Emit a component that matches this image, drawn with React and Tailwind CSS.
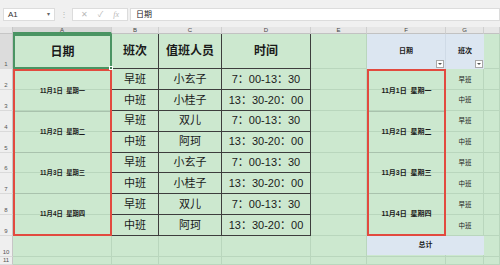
import React from "react";

const R = ["", "row-start-1", "row-start-2", "row-start-3", "row-start-4", "row-start-5", "row-start-6", "row-start-7", "row-start-8", "row-start-9", "row-start-10", "row-start-11", "row-start-12"];
const C = ["", "col-start-1", "col-start-2", "col-start-3", "col-start-4", "col-start-5", "col-start-6", "col-start-7", "col-start-8", "col-start-9"];

const groups = [
  { date: "11月1日  星期一", rows: [["早班", "小玄子", "7：00-13：30"], ["中班", "小桂子", "13：30-20：00"]] },
  { date: "11月2日  星期二", rows: [["早班", "双儿", "7：00-13：30"], ["中班", "阿珂", "13：30-20：00"]] },
  { date: "11月3日  星期三", rows: [["早班", "小玄子", "7：00-13：30"], ["中班", "小桂子", "13：30-20：00"]] },
  { date: "11月4日  星期四", rows: [["早班", "双儿", "7：00-13：30"], ["中班", "阿珂", "13：30-20：00"]] },
];

const letters = ["A", "B", "C", "D", "E", "F", "G", ""];

function Cell({ r, c, className = "", children }) {
  return <div className={`${R[r]} ${C[c]} ${className}`}>{children}</div>;
}

function FilterBtn() {
  return (
    <div className="absolute right-[1px] bottom-[1px] w-[8px] h-[8px] bg-white border border-[#a8a8a8] flex items-center justify-center">
      <div className="w-0 h-0 border-l-[2px] border-r-[2px] border-t-[2px] border-l-transparent border-r-transparent border-t-[#555]" />
    </div>
  );
}

export default function App() {
  const body = [];
  groups.forEach((g) => g.rows.forEach((row) => body.push(row)));

  const bgCells = [];
  for (let r = 2; r <= 12; r++) {
    for (let c = 2; c <= 9; c++) {
      bgCells.push(
        <Cell key={`bg-${r}-${c}`} r={r} c={c} className="bg-[#cce8cf] border-r border-b border-[#b9d6bd]" />
      );
    }
  }

  return (
    <div className="w-[500px] h-[265px] overflow-hidden bg-[#f0f0f0] font-['Liberation_Sans','Noto_Sans_CJK_SC',sans-serif] text-[#1a1a1a]">
      {/* formula bar */}
      <div className="h-[27px] flex pt-[8px]">
        <div className="ml-[3px] w-[52px] h-[13px] bg-white border border-[#dcdcdc] flex items-center justify-between px-[4px]">
          <span className="text-[8px] text-[#333]">A1</span>
          <span className="text-[6px] text-[#666]">▾</span>
        </div>
        <div className="w-[17px] h-[13px] flex items-center justify-center text-[8px] text-[#b5b5b5]">⋮</div>
        <div className="w-[56px] h-[13px] bg-white border border-[#dcdcdc] flex items-center justify-around px-[3px] text-[8px] text-[#b8b8b8]">
          <span>✕</span>
          <span>✓</span>
          <span className="italic font-['Liberation_Serif',serif]">fx</span>
        </div>
        <div className="ml-[2px] flex-1 h-[13px] bg-white border border-[#dcdcdc] flex items-center pl-[5px]">
          <span className="text-[8px] text-[#222]">日期</span>
        </div>
      </div>

      {/* sheet */}
      <div className="grid grid-cols-[13px_99px_47px_63px_89px_56px_79px_38px_1fr] grid-rows-[7px_35px_repeat(8,20.875px)_21px_1fr] h-[238px]">
        {/* corner */}
        <Cell r={1} c={1} className="bg-[#e6e6e6] border-r border-b border-[#c6c6c6] flex items-end justify-end pr-[1px] pb-[1px]">
          <div className="w-0 h-0 border-l-[4px] border-t-[4px] border-l-transparent border-t-transparent border-r-0 border-b-0 bg-[linear-gradient(135deg,transparent_50%,#b5b5b5_50%)] w-[4px] h-[4px]" />
        </Cell>
        {letters.map((l, i) => (
          <Cell
            key={`ch-${i}`}
            r={1}
            c={i + 2}
            className={`${i === 0 ? "bg-[#d6d6d6] border-b-2 border-b-[#4a9463]" : "bg-[#e6e6e6] border-b border-b-[#c2c2c2]"} border-r border-r-[#cfcfcf] flex items-center justify-center text-[6px] leading-none text-[#444]`}
          >
            {l}
          </Cell>
        ))}
        {Array.from({ length: 11 }, (_, i) => (
          <Cell
            key={`rh-${i}`}
            r={i + 2}
            c={1}
            className={`${i === 0 ? "bg-[#dcdcdc]" : "bg-[#efefef]"} border-r border-r-[#c6c6c6] border-b border-b-[#dadada] flex items-end justify-center pb-[1px] text-[6px] leading-none text-[#555]`}
          >
            {i + 1}
          </Cell>
        ))}

        {bgCells}

        {/* row 1 headers */}
        <Cell r={2} c={2} className="relative border-2 border-[#4a9463] flex items-center justify-center font-bold text-[12px]">
          日期
          <div className="absolute -right-[3px] -bottom-[3px] w-[4px] h-[4px] bg-[#3f7f52] border border-white z-10" />
        </Cell>
        {["班次", "值班人员", "时间"].map((t, i) => (
          <Cell key={`h-${i}`} r={2} c={i + 3} className="bg-[#cce8cf] border-r border-b border-[#3d3d3d] flex items-center justify-center font-bold text-[12px]">
            {t}
          </Cell>
        ))}

        {/* merged date column */}
        <Cell r={3} c={2} className="row-span-8 border-2 border-[#e24a3f] flex flex-col">
          {groups.map((g, i) => (
            <div key={`d-${i}`} className={`flex-1 flex items-center justify-center font-bold text-[6.3px] whitespace-pre ${i < 3 ? "border-b border-[#a9c2ad]" : ""}`}>
              {g.date}
            </div>
          ))}
        </Cell>

        {/* body rows */}
        {body.map((row, i) =>
          row.map((t, j) => (
            <Cell key={`b-${i}-${j}`} r={i + 3} c={j + 3} className="bg-[#cce8cf] border-r border-b border-[#3d3d3d] flex items-center justify-center text-[11px]">
              {t}
            </Cell>
          ))
        )}

        {/* pivot header */}
        <Cell r={2} c={7} className="relative bg-[#dce6f1] border-r border-[#cfdae6] flex items-center justify-center font-bold text-[7px]">
          日期
          <FilterBtn />
        </Cell>
        <Cell r={2} c={8} className="relative bg-[#dce6f1] flex items-center justify-center font-bold text-[7px]">
          班次
          <FilterBtn />
        </Cell>

        {/* pivot dates */}
        <Cell r={3} c={7} className="row-span-8 border-2 border-[#e24a3f] flex flex-col">
          {groups.map((g, i) => (
            <div key={`p-${i}`} className={`flex-1 flex items-center justify-center font-bold text-[7px] whitespace-pre ${i < 3 ? "border-b border-[#a9c2ad]" : ""}`}>
              {g.date}
            </div>
          ))}
        </Cell>
        {body.map((row, i) => (
          <Cell key={`pg-${i}`} r={i + 3} c={8} className="flex items-center justify-center text-[6.5px]">
            {row[0]}
          </Cell>
        ))}

        {/* pivot total */}
        <Cell r={11} c={7} className="col-span-2 bg-[#dce6f1] flex items-center justify-center font-bold text-[7px] mb-[2px]">
          总计
        </Cell>
      </div>
    </div>
  );
}
